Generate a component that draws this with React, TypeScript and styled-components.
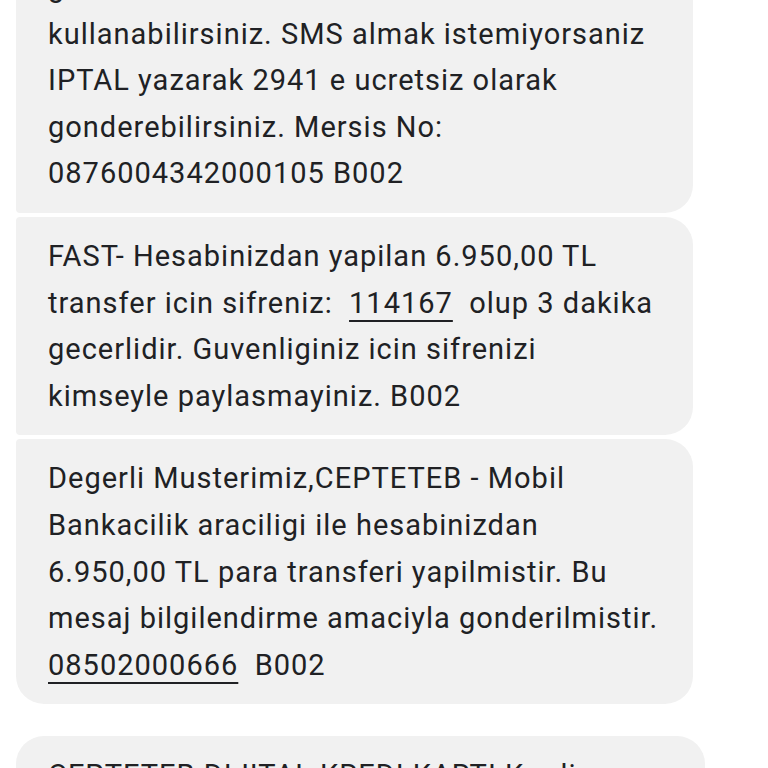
import { createGlobalStyle, styled, css } from 'styled-components'

const GlobalStyle = createGlobalStyle`
  html, body {
    margin: 0;
    padding: 0;
    background: #ffffff;
    overflow: hidden;
  }
`

type Pos = 'first' | 'middle' | 'last' | 'single'

const Thread = styled.div`
  display: flex;
  flex-direction: column;
  gap: 32px;
  margin-top: -52px;
  padding: 0 16px;
  font-family: Roboto, 'Noto Sans', sans-serif;
`

const Group = styled.div`
  display: flex;
  flex-direction: column;
  gap: 4px;
  align-items: flex-start;
`

const radius = (pos: Pos) => {
  switch (pos) {
    case 'first':
      return css`border-radius: 28px 28px 28px 4px;`
    case 'middle':
      return css`border-radius: 4px 28px 28px 4px;`
    case 'last':
      return css`border-radius: 4px 28px 28px 28px;`
    default:
      return css`border-radius: 28px;`
  }
}

const Bubble = styled.div<{ $pos: Pos; $width?: number }>`
  box-sizing: border-box;
  width: ${(p) => p.$width ?? 677}px;
  padding: 16px 32px;
  background: #f1f1f1;
  color: #202124;
  font-size: 29px;
  line-height: 46.6px;
  letter-spacing: 1px;
  ${(p) => radius(p.$pos)}
`

const Line = styled.span`
  display: block;
  white-space: pre;
`

const Code = styled.span`
  text-decoration: underline;
  text-decoration-thickness: 2px;
  text-underline-offset: 7px;
`

export default function App() {
  return (
    <>
      <GlobalStyle />
      <Thread>
        <Group>
          <Bubble $pos="first">
            <Line>gecerli olan kartlarinizla</Line>
            <Line>kullanabilirsiniz. SMS almak istemiyorsaniz</Line>
            <Line>IPTAL yazarak 2941 e ucretsiz olarak</Line>
            <Line>gonderebilirsiniz. Mersis No:</Line>
            <Line>0876004342000105 B002</Line>
          </Bubble>
          <Bubble $pos="middle">
            <Line>FAST- Hesabinizdan yapilan 6.950,00 TL</Line>
            <Line>
              transfer icin sifreniz:{'  '}
              <Code>114167</Code>
              {'  '}olup 3 dakika
            </Line>
            <Line>gecerlidir. Guvenliginiz icin sifrenizi</Line>
            <Line>kimseyle paylasmayiniz. B002</Line>
          </Bubble>
          <Bubble $pos="last">
            <Line>Degerli Musterimiz,CEPTETEB - Mobil</Line>
            <Line>Bankacilik araciligi ile hesabinizdan</Line>
            <Line>6.950,00 TL para transferi yapilmistir. Bu</Line>
            <Line>mesaj bilgilendirme amaciyla gonderilmistir.</Line>
            <Line>
              <Code>08502000666</Code>
              {'  '}B002
            </Line>
          </Bubble>
        </Group>
        <Group>
          <Bubble $pos="first" $width={689}>
            <Line>CEPTETEB DIJITAL KREDI KARTI Kredi</Line>
            <Line>karti basvurunuz onaylanmistir.</Line>
          </Bubble>
        </Group>
      </Thread>
    </>
  )
}
